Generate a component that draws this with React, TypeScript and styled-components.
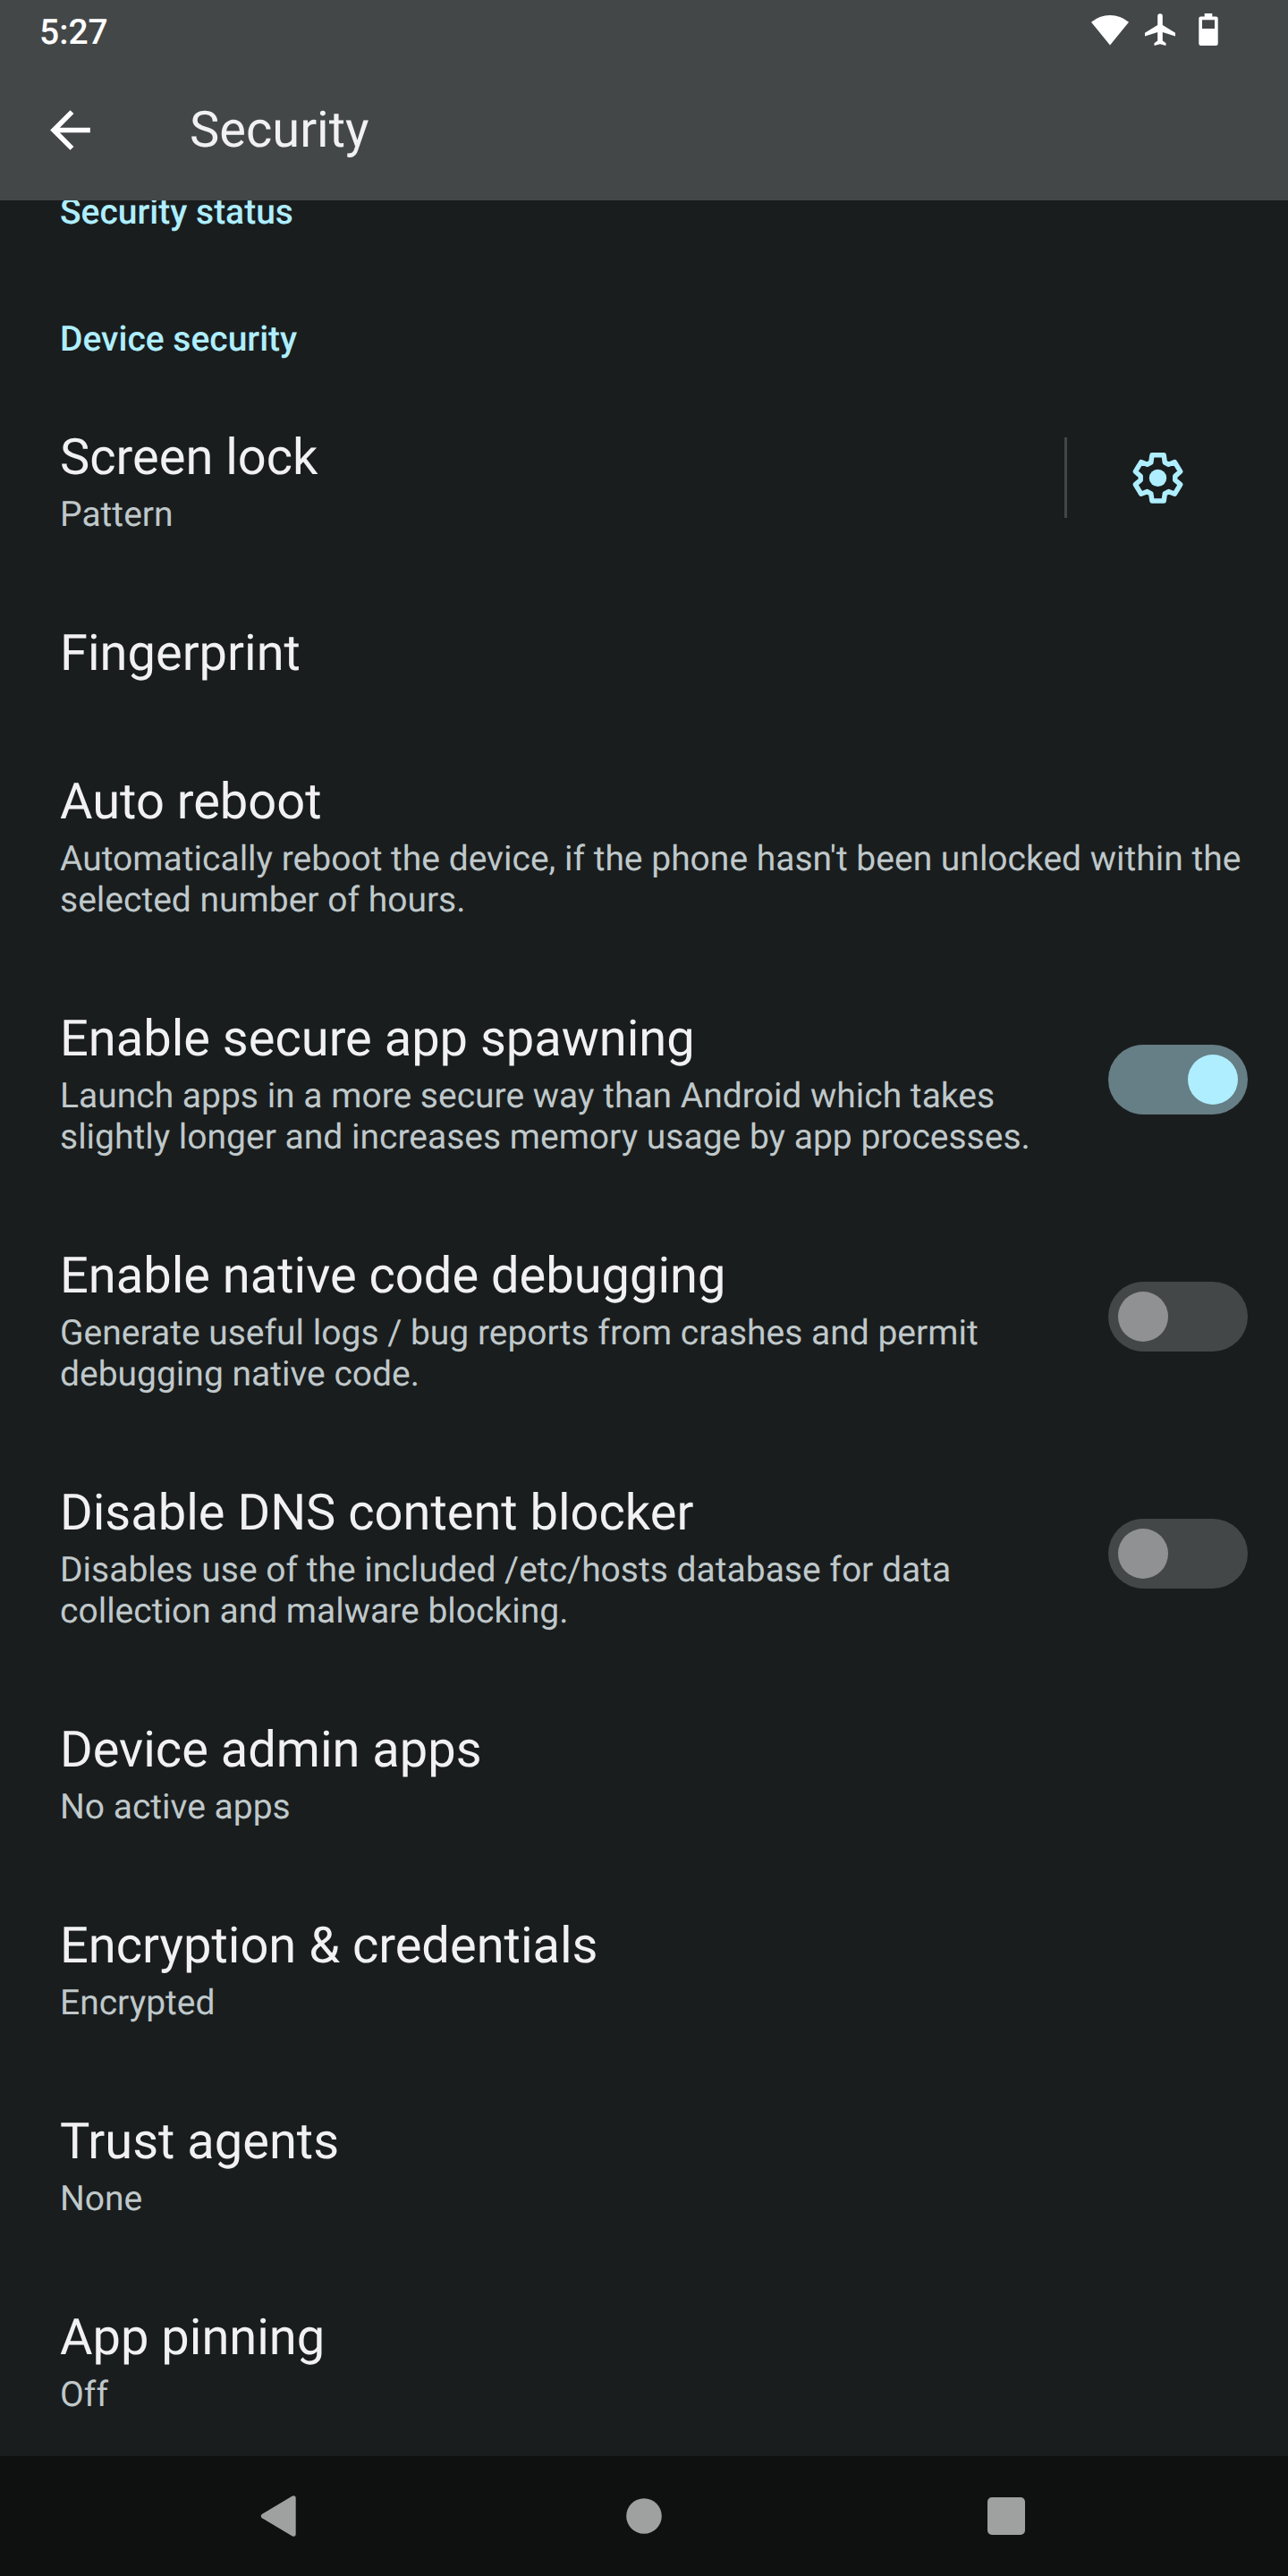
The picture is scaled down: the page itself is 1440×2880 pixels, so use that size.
import React from "react";
import styled, { createGlobalStyle, css } from "styled-components";

const GlobalStyle = createGlobalStyle`
  *, *::before, *::after { box-sizing: border-box; }
  body { margin: 0; background: #1a1d1e; }
`;

const Screen = styled.div`
  width: 1440px;
  height: 2880px;
  display: flex;
  flex-direction: column;
  background: #1a1d1e;
  color: #f1f1f3;
  font-family: Roboto, "Noto Sans", sans-serif;
  text-rendering: geometricPrecision;
  overflow: hidden;
`;

const Header = styled.header`
  flex: none;
  height: 224px;
  background: #444748;
`;

const StatusBar = styled.div`
  height: 68px;
  padding: 0 77px 0 44px;
  display: flex;
  justify-content: space-between;
`;

const Clock = styled.span`
  padding-top: 13px;
  font-size: 39px;
  line-height: 46px;
  font-weight: 500;
  color: #fff;
`;

const StatusIcons = styled.div`
  display: grid;
  grid-template-columns: 60px 60px 24px;
  padding-top: 14px;
  svg { display: block; }
`;

const Toolbar = styled.div`
  height: 156px;
  display: flex;
  align-items: center;
  padding-left: 45px;
`;

const BackButton = styled.button`
  width: 67px;
  height: 67px;
  margin: 0 100px 1px 0;
  padding: 0;
  border: 0;
  background: none;
  svg { display: block; }
`;

const ToolbarTitle = styled.h1`
  margin: 0 0 2px;
  font-size: 56px;
  line-height: 66px;
  font-weight: 400;
`;

const Content = styled.main`
  flex: 1;
  min-height: 0;
  overflow: hidden;
`;

const List = styled.div`
  margin-top: -83px;
`;

const Category = styled.h2`
  margin: 0;
  height: 142px;
  padding: 73px 67px 0;
  font-size: 39px;
  line-height: 46px;
  font-weight: 500;
  color: #aeeeff;
`;

const Row = styled.div`
  display: flex;
  align-items: center;
  padding-left: 67px;
`;

const RowText = styled.div<{ $single?: boolean }>`
  flex: 1;
  min-width: 0;
  padding: 53px 0 ${(p) => (p.$single ? 47 : 46)}px;
`;

const Title = styled.div`
  font-size: 56px;
  line-height: 66px;
  white-space: nowrap;
`;

const Summary = styled.div`
  margin-top: 8px;
  font-size: 39px;
  line-height: 46px;
  white-space: pre-line;
  color: #bfc8ca;
`;

const SwitchTrack = styled.span<{ $on?: boolean }>`
  flex: none;
  width: 156px;
  height: 78px;
  margin: 0 45px 1px 0;
  padding: 11px;
  border-radius: 39px;
  display: flex;
  background: #444748;
  ${(p) => p.$on && css`
    justify-content: flex-end;
    background: #667e85;
  `}
`;

const SwitchThumb = styled.span<{ $on?: boolean }>`
  width: 56px;
  height: 56px;
  border-radius: 50%;
  background: ${(p) => (p.$on ? "#aeeeff" : "#909193")};
`;

const GearArea = styled.div`
  display: flex;
  align-items: center;
  width: 250px;
  height: 90px;
  margin-bottom: 1px;
  padding-left: 67px;
  border-left: 3px solid #444748;
`;

const NavBar = styled.nav`
  flex: none;
  height: 134px;
  display: flex;
  justify-content: center;
  align-items: center;
  gap: 337px;
  background: #0f1110;
  svg { display: block; }
`;

type Item = { title: string; summary?: string; gear?: boolean; toggle?: "on" | "off" };

const items: Item[] = [
  { title: "Screen lock", summary: "Pattern", gear: true },
  { title: "Fingerprint" },
  {
    title: "Auto reboot",
    summary: "Automatically reboot the device, if the phone hasn't been unlocked within the\nselected number of hours.",
  },
  {
    title: "Enable secure app spawning",
    summary: "Launch apps in a more secure way than Android which takes\nslightly longer and increases memory usage by app processes.",
    toggle: "on",
  },
  {
    title: "Enable native code debugging",
    summary: "Generate useful logs / bug reports from crashes and permit\ndebugging native code.",
    toggle: "off",
  },
  {
    title: "Disable DNS content blocker",
    summary: "Disables use of the included /etc/hosts database for data\ncollection and malware blocking.",
    toggle: "off",
  },
  { title: "Device admin apps", summary: "No active apps" },
  { title: "Encryption & credentials", summary: "Encrypted" },
  { title: "Trust agents", summary: "None" },
  { title: "App pinning", summary: "Off" },
];

const WifiIcon = () => (
  <svg width="44" height="38" viewBox="0 0 44 38" fill="#fff">
    <path d="M22 36.400L1 10.800A32 32 0 0 1 43 10.800Z" />
  </svg>
);

const AirplaneIcon = () => (
  <svg width="36" height="38" viewBox="0 0 36 38" fill="#fff">
    <path d="M15.200 4a2.800 2.800 0 0 1 5.600 0V14L35 22.800V26.500L20.800 22V31.500L24.500 34.200V37L18 35.200L11.500 37V34.200L15.200 31.500V22L1 26.500V22.800L15.200 14Z" />
  </svg>
);

const BatteryIcon = () => (
  <svg width="24" height="38" viewBox="0 0 24 38" fill="#fff">
    <path fillRule="evenodd" d="M7.700 1h8.600v3.400h4.200a2.200 2.200 0 0 1 2.200 2.200v28.200a2.200 2.200 0 0 1-2.200 2.200h-17a2.200 2.200 0 0 1-2.200-2.200v-28.200a2.200 2.200 0 0 1 2.200-2.200h4.200zM5 8.200v9.800h14v-9.800z" />
  </svg>
);

const BackIcon = () => (
  <svg width="67" height="67" viewBox="0 0 24 24" fill="#fff">
    <path d="M20 11H7.830l5.590-5.590L12 4l-8 8 8 8 1.410-1.410L7.830 13H20v-2z" />
  </svg>
);

const GearIcon = () => (
  <svg width="68" height="68" viewBox="0 0 68 68">
    <path
      d="M28 8.800H41.200L42.300 17L46.500 19.200L53.300 16.600L59.700 27.200L53.800 32.300V36.700L59.700 41.700L53.300 52.200L46.500 49.600L42.300 52L41.200 60.100H28L26.800 52L22.600 49.600L15.800 52.200L9.400 41.700L15.200 36.700V32.300L9.400 27.200L15.800 16.600L22.600 19.200L26.800 17Z"
      fill="none" stroke="#aeeeff" strokeWidth="5.500" strokeLinejoin="round"
    />
    <circle cx="34.500" cy="34.400" r="9.700" fill="#aeeeff" />
  </svg>
);

const NavBackIcon = () => (
  <svg width="68" height="68" viewBox="0 0 68 68" fill="#9fa1a0">
    <path d="M45.500 11.800Q49.700 10 49.700 14.500V53.500Q49.700 58 45.500 56.200L12 36.300Q9.400 34 12 31.700Z" />
  </svg>
);

const NavHomeIcon = () => (
  <svg width="68" height="68" viewBox="0 0 68 68" fill="#9fa1a0">
    <circle cx="34" cy="34" r="19.800" />
  </svg>
);

const NavRecentsIcon = () => (
  <svg width="68" height="68" viewBox="0 0 68 68" fill="#9fa1a0">
    <rect x="13" y="13" width="42" height="42" rx="5" />
  </svg>
);

export default function App() {
  return (
    <>
      <GlobalStyle />
      <Screen>
        <Header>
          <StatusBar>
            <Clock>5:27</Clock>
            <StatusIcons>
              <WifiIcon />
              <AirplaneIcon />
              <BatteryIcon />
            </StatusIcons>
          </StatusBar>
          <Toolbar>
            <BackButton aria-label="Back"><BackIcon /></BackButton>
            <ToolbarTitle>Security</ToolbarTitle>
          </Toolbar>
        </Header>
        <Content>
          <List>
            <Category>Security status</Category>
            <Category>Device security</Category>
            {items.map((item) => (
              <Row key={item.title}>
                <RowText $single={!item.summary}>
                  <Title>{item.title}</Title>
                  {item.summary && <Summary>{item.summary}</Summary>}
                </RowText>
                {item.gear && <GearArea><GearIcon /></GearArea>}
                {item.toggle && (
                  <SwitchTrack $on={item.toggle === "on"}>
                    <SwitchThumb $on={item.toggle === "on"} />
                  </SwitchTrack>
                )}
              </Row>
            ))}
          </List>
        </Content>
        <NavBar>
          <NavBackIcon />
          <NavHomeIcon />
          <NavRecentsIcon />
        </NavBar>
      </Screen>
    </>
  );
}
